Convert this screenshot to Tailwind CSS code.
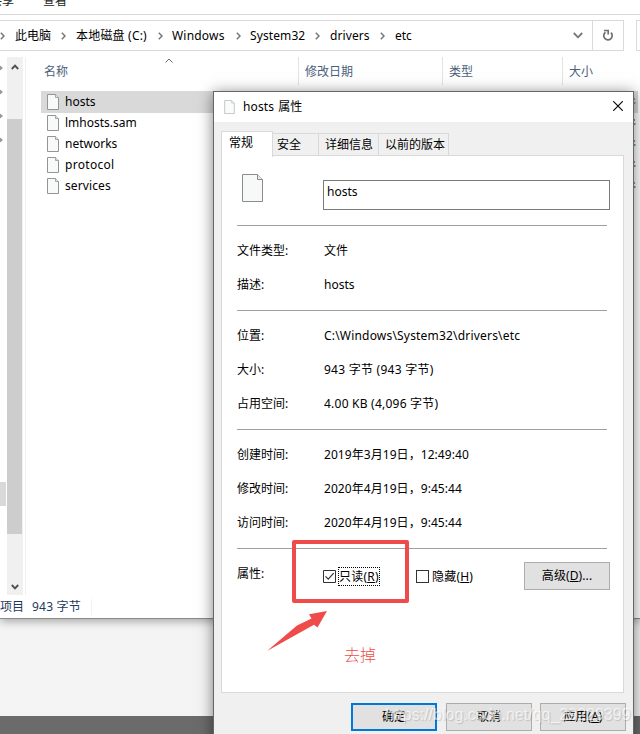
<!DOCTYPE html>
<html lang="zh-CN">
<head>
<meta charset="utf-8">
<title>hosts 属性</title>
<script src="https://cdn.jsdelivr.net/npm/@tailwindcss/browser@4"></script>
</head>
<body class="overflow-hidden">
<svg class="hidden">
  <symbol id="file" viewBox="0 0 12 16"><path d="M.5.5h8l3 3v12H.5z" fill="#f8f9f9" stroke="#949494"/><path d="M8.500.5v3h3" fill="#e4e4e4" stroke="#949494" stroke-width=".8"/></symbol>
  <symbol id="chev" viewBox="0 0 5 8"><path d="M.8.8 4 4 .8 7.200" fill="none" stroke="#777" stroke-width="1.500"/></symbol>
  <symbol id="pin" viewBox="0 0 4 8"><path d="M0 1.500 3 4 0 6.500z" fill="#8d9aa5"/></symbol>
  <symbol id="edge" viewBox="0 0 2 8"><path d="M0 0h1v2H0z" fill="#8a93a8"/><path d="M0 4h1.500v2H0z" fill="#5fa3bd"/></symbol>
</svg>
<div class="relative w-[640px] h-[734px] overflow-hidden bg-[#f4f4f4] text-[12px] leading-[16px] text-black whitespace-nowrap font-['Noto_Sans','Noto_Sans_CJK_SC',sans-serif]">

  <!-- Explorer window -->
  <div class="flex flex-col h-[619px] bg-white border-b border-[#8a8a8a] shadow-[0_2px_9px_rgba(0,0,0,0.35)]">
    <div class="h-[15px] shrink-0 overflow-hidden border-b border-[#dadada] text-[#222]">
      <div class="flex -mt-[7px]"><span class="w-[43px] -ml-[10px] mr-[10px]">共享</span><span>查看</span></div>
    </div>
    <div class="flex h-[31px] shrink-0 mt-[5px]">
      <div class="flex items-center shrink-0 w-[593px] border-y border-r border-[#d9d9d9]">
        <svg class="w-[5px] h-[8px] mr-[10px]"><use href="#chev"/></svg>
        <span class="w-[46px]">此电脑</span>
        <svg class="w-[5px] h-[8px] mr-[10px]"><use href="#chev"/></svg>
        <span class="w-[82px] tracking-[0.2px]">本地磁盘 (C:)</span>
        <svg class="w-[5px] h-[8px] mr-[9px]"><use href="#chev"/></svg>
        <span class="w-[64px] tracking-[0.2px]">Windows</span>
        <svg class="w-[5px] h-[8px] mr-[9px]"><use href="#chev"/></svg>
        <span class="w-[65px] tracking-[0.1px]">System32</span>
        <svg class="w-[5px] h-[8px] mr-[10px]"><use href="#chev"/></svg>
        <span class="w-[50px] tracking-[0.1px]">drivers</span>
        <svg class="w-[5px] h-[8px] mr-[10px]"><use href="#chev"/></svg>
        <span>etc</span>
        <svg class="w-[10px] h-[7px] ml-auto mr-[9px]" viewBox="0 0 10 7"><path d="M.8 1 5 5.300 9.200 1" fill="none" stroke="#777" stroke-width="1.800"/></svg>
      </div>
      <div class="flex items-center justify-center shrink-0 w-[31px] border-y border-r border-[#d9d9d9]">
        <svg class="w-[12px] h-[13px]" viewBox="0 0 12 13"><path d="M3.500 3.200A4.200 4.200 0 1 0 9 3.700M2 1.500h4.200v4" fill="none" stroke="#707070" stroke-width="1.700"/></svg>
      </div>
      <div class="ml-[12px] w-[10px] shrink-0 border border-[#d9d9d9]"></div>
    </div>
    <div class="flex h-[544px] shrink-0 mt-[6px]">
      <!-- navigation strip -->
      <div class="flex flex-col w-[7px] h-[538px]">
        <svg class="w-[4px] h-[8px] mt-[7px]"><use href="#pin"/></svg>
        <svg class="w-[4px] h-[8px] mt-[16px]"><use href="#pin"/></svg>
        <svg class="w-[4px] h-[8px] mt-[16px]"><use href="#pin"/></svg>
        <svg class="w-[4px] h-[8px] mt-[16px]"><use href="#pin"/></svg>
        <div class="w-[6px] h-[24px] bg-[#d9d9d9] mt-[338px]"></div>
      </div>
      <div class="flex flex-col items-center w-[16px] h-[538px] bg-[#f0f0f0] pt-[7px]">
        <svg class="w-[8px] h-[6px]" viewBox="0 0 8 6"><path d="M.8 5 4 1.600 7.200 5" fill="none" stroke="#505050" stroke-width="1.900"/></svg>
        <div class="w-[15px] h-[415px] mt-[49px] mr-[1px] bg-[#cdcdcd]"></div>
        <svg class="w-[8px] h-[6px] mt-[50px]" viewBox="0 0 8 6"><path d="M.8 1 4 4.400 7.200 1" fill="none" stroke="#505050" stroke-width="1.900"/></svg>
      </div>
      <div class="w-[3px] h-[538px] border-r border-[#f0f0f0]"></div>
      <!-- file list -->
      <div class="flex-1 pl-[15px]">
        <div class="flex h-[28px] text-[#4c607a]">
          <div class="flex w-[257px] pl-[3px] pt-[7px]">名称
            <svg class="w-[8px] h-[5px] ml-[97px] -mt-[6px]" viewBox="0 0 8 5"><path d="M.5 4.500 4 1l3.500 3.500" fill="none" stroke="#6b6b6b"/></svg>
          </div>
          <div class="w-[144px] border-l border-[#e3e3e3] pl-[6px] pt-[7px]">修改日期</div>
          <div class="w-[120px] border-l border-[#e3e3e3] pl-[6px] pt-[7px]">类型</div>
          <div class="border-l border-[#e3e3e3] pl-[6px] pt-[7px]">大小</div>
        </div>
        <div class="mt-[6px]">
          <div class="flex items-center h-[22px] -mb-[1px] w-[597px] bg-[#d9d9d9] pl-[6px] pr-[2px] gap-[6px]"><svg class="w-[12px] h-[16px]"><use href="#file"/></svg><span>hosts</span><svg class="w-[2px] h-[8px] ml-auto"><use href="#edge"/></svg></div>
          <div class="flex items-center h-[21px] w-[597px] pl-[6px] pr-[2px] gap-[6px]"><svg class="w-[12px] h-[16px]"><use href="#file"/></svg><span>lmhosts.sam</span><svg class="w-[2px] h-[8px] ml-auto"><use href="#edge"/></svg></div>
          <div class="flex items-center h-[21px] w-[597px] pl-[6px] pr-[2px] gap-[6px]"><svg class="w-[12px] h-[16px]"><use href="#file"/></svg><span>networks</span><svg class="w-[2px] h-[8px] ml-auto"><use href="#edge"/></svg></div>
          <div class="flex items-center h-[21px] w-[597px] pl-[6px] pr-[2px] gap-[6px]"><svg class="w-[12px] h-[16px]"><use href="#file"/></svg><span class="tracking-[0.3px]">protocol</span><svg class="w-[2px] h-[8px] ml-auto"><use href="#edge"/></svg></div>
          <div class="flex items-center h-[21px] w-[597px] pl-[6px] pr-[2px] gap-[6px]"><svg class="w-[12px] h-[16px]"><use href="#file"/></svg><span class="tracking-[0.1px]">services</span><svg class="w-[2px] h-[8px] ml-auto"><use href="#edge"/></svg></div>
        </div>
      </div>
    </div>
    <div class="flex -mt-[2px] h-[16px] text-[#1e395b]"><span class="w-[32px]">项目</span><span class="w-[60px] border-r border-[#f2f2f2] tracking-[0.2px]">943 字节</span></div>
  </div>
  <!-- dark bottom band -->
  <div class="mt-[97px] h-[18px] bg-[#6b6b6b]"></div>

  <!-- Properties dialog -->
  <div class="absolute left-[213px] top-[91px] w-[421px] h-[660px] bg-[#f0f0f0] border border-[#666] shadow-[0_2px_14px_rgba(0,0,0,0.5)]">
    <div class="flex items-center h-[30px] bg-white pl-[10px] pr-[10px]">
      <svg class="w-[11px] h-[14px] mr-[8px] opacity-60"><use href="#file"/></svg>
      <span class="[word-spacing:1px] tracking-[0.1px]">hosts 属性</span>
      <svg class="w-[10px] h-[10px] ml-auto -mt-[2px]" viewBox="0 0 10 10"><path d="m.2.2 9.600 9.600m0-9.600-9.600 9.600" stroke="#000" stroke-width="1.100"/></svg>
    </div>
    <div class="flex items-end h-[33px] pl-[7px] mt-[1px]">
      <div class="w-[52px] h-[26px] bg-white border border-b-0 border-[#d9d9d9] pl-[7px] pt-[3px] relative z-10 -mb-[1px]">常规</div>
      <div class="w-[46px] h-[23px] border-t border-r border-[#d9d9d9] pl-[4px] pt-[3px]">安全</div>
      <div class="w-[60px] h-[23px] border-t border-r border-[#d9d9d9] pl-[6px] pt-[3px]">详细信息</div>
      <div class="w-[70px] h-[23px] border-t border-r border-[#d9d9d9] pl-[6px] pt-[3px]">以前的版本</div>
    </div>
    <div class="ml-[7px] -mt-[1px] w-[403px] h-[538px] bg-white border border-[#d9d9d9] pl-[15px] pr-[16px]">
      <div class="flex h-[70px] border-b border-[#a0a0a0]">
        <svg class="w-[21px] h-[28px] ml-[5px] mt-[18px]" viewBox="0 0 21 28"><path d="M.5.5h15l5 5v22H.5z" fill="#f7f8f8" stroke="#8b8b8b"/><path d="M15.500.5v5h5" fill="#e8e8e8" stroke="#8b8b8b"/></svg>
        <div class="ml-[60px] -mr-[3px] mt-[24px] w-[287px] h-[30px] shrink-0 border border-[#7a7a7a] pl-[3px] pt-[3px]">hosts</div>
      </div>
      <div class="grid grid-cols-[87px_1fr] auto-rows-[34px] h-[85px] pt-[17px] border-b border-[#a0a0a0]">
        <span>文件类型:</span><span>文件</span>
        <span>描述:</span><span>hosts</span>
      </div>
      <div class="grid grid-cols-[87px_1fr] auto-rows-[34px] h-[119px] pt-[17px] border-b border-[#a0a0a0]">
        <span>位置:</span><span class="tracking-[0.19px]">C:\Windows\System32\drivers\etc</span>
        <span>大小:</span><span class="tracking-[0.25px]">943 字节 (943 字节)</span>
        <span>占用空间:</span><span class="tracking-[0.23px]">4.00 KB (4,096 字节)</span>
      </div>
      <div class="grid grid-cols-[87px_1fr] auto-rows-[34px] h-[119px] pt-[17px] border-b border-[#a0a0a0]">
        <span>创建时间:</span><span class="tracking-[0.06px]">2019年3月19日，12:49:40</span>
        <span>修改时间:</span><span class="tracking-[0.06px]">2020年4月19日，9:45:44</span>
        <span>访问时间:</span><span class="tracking-[0.06px]">2020年4月19日，9:45:44</span>
      </div>
      <div class="flex pt-[13px] -mr-[3px]">
        <span class="w-[86px] pt-[4px]">属性:</span>
        <div class="flex items-center h-[28px] w-[93px]">
          <svg class="w-[13px] h-[13px]" viewBox="0 0 13 13"><path d="M.5.5h12v12H.5z" fill="#fff" stroke="#333"/><path d="m2.500 6.300 2.800 2.900 5.300-6" fill="none" stroke="#333" stroke-width="1.200"/></svg>
          <span class="ml-[2px] w-[42px] h-[19px] border border-dotted border-black pt-[1px] tracking-[0.2px]">只读(<u>R</u>)</span>
        </div>
        <div class="flex items-center h-[29px] tracking-[0.2px]">
          <span class="w-[13px] h-[13px] border border-[#333] mr-[3px] -mt-[1px]"></span>隐藏(<u>H</u>)
        </div>
        <div class="ml-auto w-[86px] h-[28px] bg-[#e1e1e1] border border-[#adadad] flex items-center justify-center tracking-[0.1px]">高级(<u>D</u>)...</div>
      </div>
    </div>
    <div class="flex gap-[9px] pl-[137px] mt-[10px]">
      <div class="w-[86px] h-[28px] bg-[#e1e1e1] border-2 border-[#0078d7] flex items-center justify-center">确定</div>
      <div class="w-[86px] h-[28px] bg-[#e1e1e1] border border-[#adadad] flex items-center justify-center">取消</div>
      <div class="w-[86px] h-[28px] -ml-[1px] bg-[#e1e1e1] border border-[#adadad] flex items-center justify-center">应用(<u>A</u>)</div>
    </div>
  </div>

  <!-- annotations -->
  <div class="absolute left-[292px] top-[540px] w-[117px] h-[63px] rounded-[2px] border-4 border-[#f04b4b]"></div>
  <svg class="absolute left-[266px] top-[610px] w-[62px] h-[42px]" viewBox="0 0 62 42"><path d="M1 41 Q20 20 35 10L32.500 4.500 61 1 52 17.500 48.500 14.500Q25 26 1 41z" fill="none"/><path d="M1 41 31 15.500 45.500 8.500 43 4.300 61 1 51.500 17.500 48 14.800z" fill="#f04b4b"/></svg>
  <div class="absolute left-[344px] top-[643px] text-[16px] leading-[24px] text-[#f04b4b] font-light">去掉</div>
  <div class="absolute left-[385px] top-[705px] text-[16px] leading-[20px] text-white/65 [text-shadow:1px_1px_1px_rgba(0,0,0,0.15)] font-['Liberation_Sans',sans-serif]">https://blog.csdn.net/qq_29229399</div>
</div>
</body>
</html>
